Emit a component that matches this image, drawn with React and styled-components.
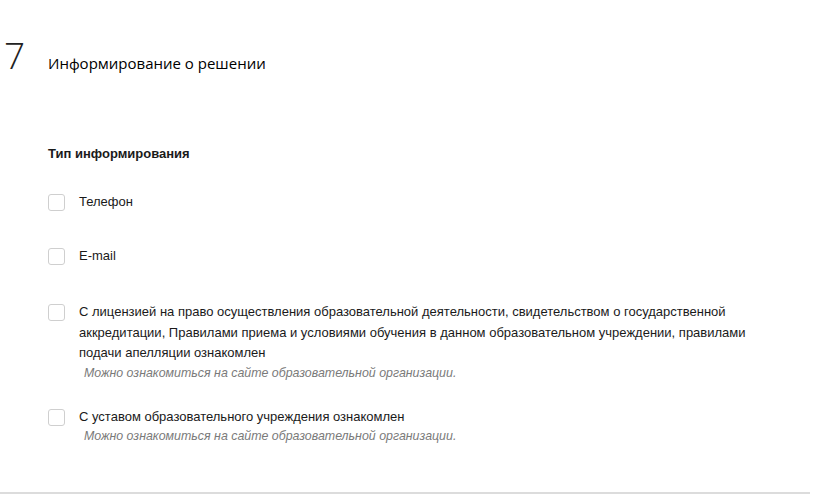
import styled, { createGlobalStyle } from "styled-components";

const GlobalStyle = createGlobalStyle`
  html, body {
    margin: 0;
    padding: 0;
    background: #fff;
  }
  body {
    font-family: "Liberation Sans", Arial, sans-serif;
    color: #222;
  }
`;

const Card = styled.div`
  width: 810px;
  height: 494px;
  box-sizing: border-box;
  border-bottom: 2px solid #dcdcdc;
  padding-top: 33px;
`;

const Header = styled.div`
  display: flex;
  align-items: flex-start;
`;

const StepNumber = styled.div`
  width: 48px;
  padding-left: 4px;
  box-sizing: border-box;
  font-family: "Open Sans", sans-serif;
  font-weight: 300;
  font-size: 37px;
  line-height: 44px;
  color: #222;
`;

const Title = styled.h2`
  margin: 18px 0 0;
  font-family: "Open Sans", sans-serif;
  font-weight: 400;
  font-size: 15px;
  line-height: 24px;
  color: #000;
`;

const Body = styled.div`
  padding-left: 48px;
  padding-top: 67px;
`;

const GroupTitle = styled.div`
  font-weight: bold;
  font-size: 13px;
  line-height: 20px;
  color: #1a1a1a;
  margin-bottom: 28px;
`;

const Option = styled.label`
  display: flex;
  align-items: flex-start;
  margin-bottom: ${(p) => p.$gap}px;
  cursor: pointer;
`;

const Box = styled.span`
  flex: none;
  width: 17px;
  height: 17px;
  box-sizing: border-box;
  border: 1px solid #cfcfcf;
  border-radius: 3px;
  background: #fff;
  margin-top: 2px;
  margin-right: 14px;
`;

const OptionText = styled.div`
  width: 680px;
`;

const Label = styled.div`
  font-size: 13px;
  line-height: 20.5px;
  color: #1a1a1a;
`;

const Hint = styled.div`
  margin-top: 1px;
  padding-left: 5px;
  font-size: 12.4px;
  font-style: italic;
  line-height: 16px;
  color: #7a7a7a;
`;

const options = [
  { label: "Телефон", gap: 33 },
  { label: "E-mail", gap: 36 },
  {
    label:
      "С лицензией на право осуществления образовательной деятельности, свидетельством о государственной аккредитации, Правилами приема и условиями обучения в данном образовательном учреждении, правилами подачи апелляции ознакомлен",
    hint: "Можно ознакомиться на сайте образовательной организации.",
    gap: 26,
  },
  {
    label: "С уставом образовательного учреждения ознакомлен",
    hint: "Можно ознакомиться на сайте образовательной организации.",
    gap: 0,
  },
];

export default function App() {
  return (
    <>
      <GlobalStyle />
      <Card>
        <Header>
          <StepNumber>7</StepNumber>
          <Title>Информирование о решении</Title>
        </Header>
        <Body>
          <GroupTitle>Тип информирования</GroupTitle>
          {options.map((o) => (
            <Option key={o.label} $gap={o.gap}>
              <Box />
              <OptionText>
                <Label>{o.label}</Label>
                {o.hint && <Hint>{o.hint}</Hint>}
              </OptionText>
            </Option>
          ))}
        </Body>
      </Card>
    </>
  );
}
